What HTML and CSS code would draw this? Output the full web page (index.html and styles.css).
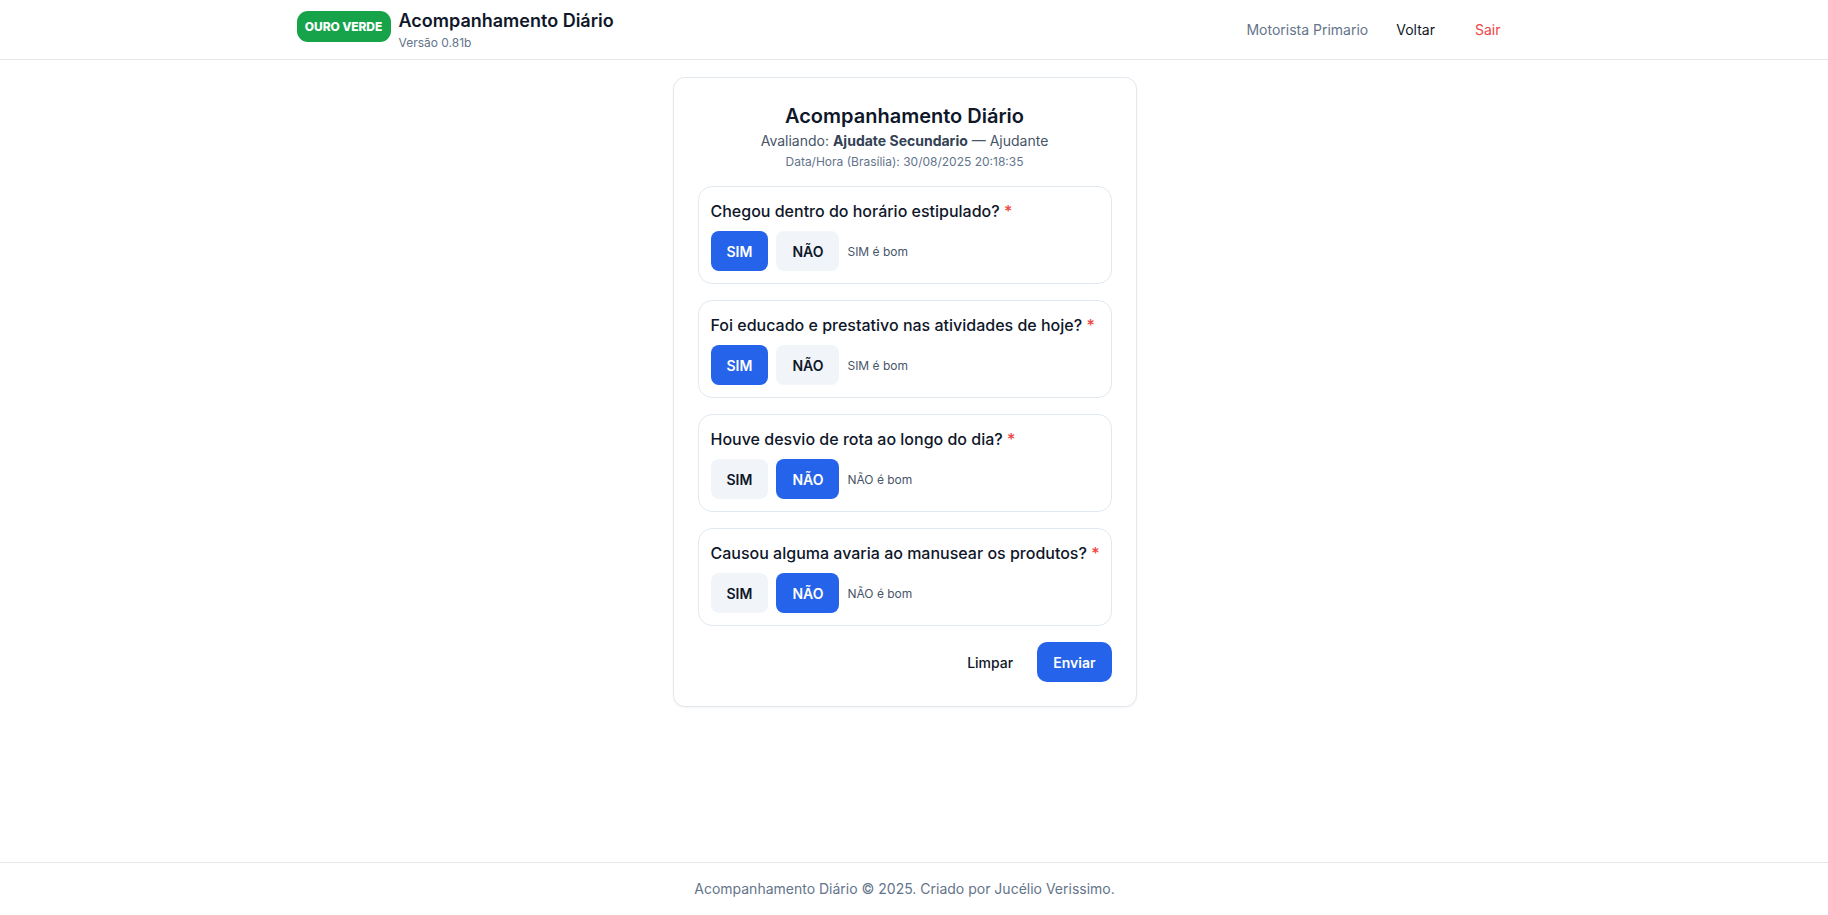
FILE: index.html
```html
<!DOCTYPE html>
<html lang="pt-BR">
<head>
<meta charset="utf-8">
<title>Acompanhamento Diário</title>
<link rel="stylesheet" href="styles.css">
</head>
<body>
<div class="page">
  <header class="header">
    <div class="gutter">
      <div class="container header-inner">
        <div class="brand">
          <span class="badge">OURO VERDE</span>
          <div class="brand-text">
            <div class="brand-title">Acompanhamento Diário</div>
            <div class="brand-version">Versão 0.81b</div>
          </div>
        </div>
        <nav class="nav">
          <span class="nav-user">Motorista Primario</span>
          <button class="nav-btn">Voltar</button>
          <button class="nav-btn nav-danger">Sair</button>
        </nav>
      </div>
    </div>
  </header>

  <main class="main gutter">
    <section class="card">
      <h1 class="card-title">Acompanhamento Diário</h1>
      <p class="card-sub">Avaliando: <strong>Ajudate Secundario</strong> — Ajudante</p>
      <p class="card-date">Data/Hora (Brasília): 30/08/2025 20:18:35</p>

      <div class="questions">
        <div class="question">
          <div class="q-label">Chegou dentro do horário estipulado? <span class="req">*</span></div>
          <div class="q-options">
            <button class="opt opt-active">SIM</button>
            <button class="opt">NÃO</button>
            <span class="hint">SIM é bom</span>
          </div>
        </div>
        <div class="question">
          <div class="q-label">Foi educado e prestativo nas atividades de hoje? <span class="req">*</span></div>
          <div class="q-options">
            <button class="opt opt-active">SIM</button>
            <button class="opt">NÃO</button>
            <span class="hint">SIM é bom</span>
          </div>
        </div>
        <div class="question">
          <div class="q-label">Houve desvio de rota ao longo do dia? <span class="req">*</span></div>
          <div class="q-options">
            <button class="opt">SIM</button>
            <button class="opt opt-active">NÃO</button>
            <span class="hint">NÃO é bom</span>
          </div>
        </div>
        <div class="question">
          <div class="q-label">Causou alguma avaria ao manusear os produtos? <span class="req">*</span></div>
          <div class="q-options">
            <button class="opt">SIM</button>
            <button class="opt opt-active">NÃO</button>
            <span class="hint">NÃO é bom</span>
          </div>
        </div>
      </div>

      <div class="actions">
        <button class="btn-ghost">Limpar</button>
        <button class="btn-primary">Enviar</button>
      </div>
    </section>
  </main>

  <footer class="footer">
    <div class="gutter">
      <p class="footer-text">Acompanhamento Diário © 2025. Criado por Jucélio Verissimo.</p>
    </div>
  </footer>
</div>
</body>
</html>
```

FILE: styles.css
```css
* { box-sizing: border-box; }

html, body {
  margin: 0;
  padding: 0;
  background: #ffffff;
  font-family: Inter, "Noto Sans", "Liberation Sans", sans-serif;
  color: #0f172a;
}

button {
  font-family: inherit;
  border: none;
  cursor: pointer;
}

.page {
  min-height: 100vh;
  display: flex;
  flex-direction: column;
}

.gutter {
  padding-right: 19px;
}

.container {
  max-width: 1280px;
  margin: 0 auto;
  padding: 0 32px;
}

/* Header */
.header {
  border-bottom: 1px solid #e5e7eb;
  background: #fff;
}

.header-inner {
  height: 59px;
  display: flex;
  align-items: center;
  justify-content: space-between;
}

.brand {
  display: flex;
  align-items: center;
  gap: 8px;
}

.badge {
  display: inline-flex;
  align-items: center;
  justify-content: center;
  height: 31px;
  width: 94px;
  border-radius: 11px;
  background: #16a34a;
  color: #fff;
  font-size: 12px;
  font-weight: 800;
  margin-bottom: 6px;
  letter-spacing: -0.1px;
}

.brand-text {
  display: flex;
  flex-direction: column;
  margin-bottom: 2px;
}

.brand-title {
  font-size: 18px;
  line-height: 28px;
  font-weight: 600;
  color: #0f172a;
}

.brand-version {
  font-size: 12px;
  line-height: 16px;
  color: #64748b;
}

.nav {
  display: flex;
  align-items: center;
  gap: 16px;
}

.nav-user {
  font-size: 14px;
  line-height: 20px;
  color: #64748b;
}

.nav-btn {
  background: transparent;
  font-size: 14px;
  line-height: 20px;
  padding: 6px 12px;
  color: #0f172a;
  border-radius: 8px;
}

.nav-danger {
  color: #ef4444;
}

/* Main */
.main {
  flex: 1;
  padding-top: 17px;
}

.card {
  width: 464px;
  margin: 0 auto;
  border: 1px solid #e2e8f0;
  border-radius: 12px;
  padding: 24px;
  background: #fff;
  box-shadow: 0 1px 2px rgba(15, 23, 42, 0.05);
}

.card-title {
  margin: 0;
  text-align: center;
  font-size: 20px;
  line-height: 28px;
  font-weight: 600;
  color: #0f172a;
}

.card-sub {
  margin: 1px 0 0;
  text-align: center;
  font-size: 14px;
  line-height: 20px;
  color: #475569;
}

.card-sub strong {
  font-weight: 700;
  color: #334155;
}

.card-date {
  margin: 3px 0 0;
  text-align: center;
  font-size: 12px;
  line-height: 16px;
  color: #64748b;
}

.questions {
  margin-top: 16px;
  display: flex;
  flex-direction: column;
  gap: 16px;
}

.question {
  border: 1px solid #e2e8f0;
  border-radius: 14px;
  padding: 12px 6px 12px 12px;
}

.q-label {
  font-size: 16px;
  line-height: 24px;
  font-weight: 500;
  color: #0f172a;
  white-space: nowrap;
}

.req {
  color: #ef4444;
}

.q-options {
  margin-top: 8px;
  display: flex;
  align-items: center;
  gap: 8px;
}

.opt {
  height: 40px;
  padding: 0 16px;
  border-radius: 8px;
  background: #f1f5f9;
  color: #0f172a;
  font-size: 14px;
  font-weight: 600;
}

.opt-active {
  background: #2563eb;
  color: #fff;
}

.hint {
  font-size: 12px;
  color: #475569;
}

.actions {
  margin-top: 16px;
  display: flex;
  justify-content: flex-end;
  gap: 8px;
}

.btn-ghost {
  height: 40px;
  padding: 0 16px;
  background: transparent;
  color: #0f172a;
  font-size: 14px;
  font-weight: 500;
  border-radius: 10px;
}

.btn-primary {
  height: 40px;
  padding: 0 16px;
  background: #2563eb;
  color: #fff;
  font-size: 14px;
  font-weight: 600;
  border-radius: 10px;
}

/* Footer */
.footer {
  border-top: 1px solid #e5e7eb;
}

.footer-text {
  margin: 0;
  padding: 16px 0;
  text-align: center;
  font-size: 14px;
  line-height: 20px;
  color: #64748b;
}
```
